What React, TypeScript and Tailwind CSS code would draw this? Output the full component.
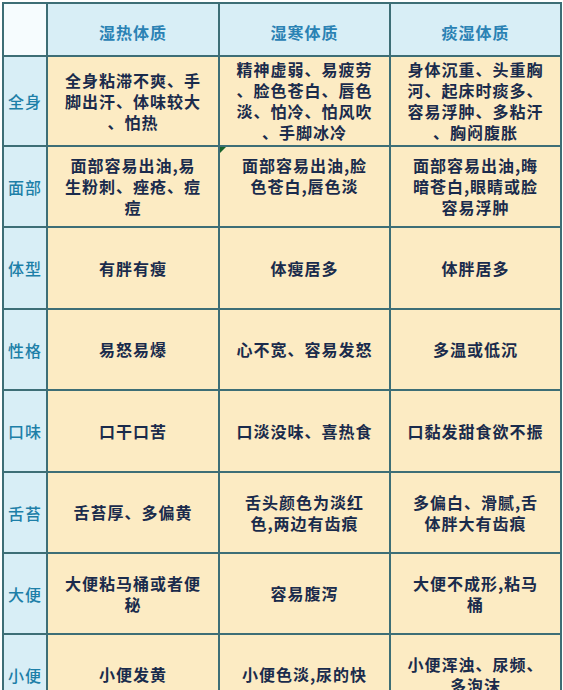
import React from "react";

const rows: { label: string; h: number; cells: string[][]; mark?: boolean }[] = [
  {
    label: "全身",
    h: 88,
    cells: [
      ["全身粘滞不爽、手", "脚出汗、体味较大", "、怕热"],
      ["精神虚弱、易疲劳", "、脸色苍白、唇色", "淡、怕冷、怕风吹", "、手脚冰冷"],
      ["身体沉重、头重胸", "河、起床时痰多、", "容易浮肿、多粘汗", "、胸闷腹胀"],
    ],
  },
  {
    label: "面部",
    h: 79,
    mark: true,
    cells: [
      ["面部容易出油,易", "生粉刺、痤疮、痘", "痘"],
      ["面部容易出油,脸", "色苍白,唇色淡", "\u00a0"],
      ["面部容易出油,晦", "暗苍白,眼睛或脸", "容易浮肿"],
    ],
  },
  { label: "体型", h: 80, cells: [["有胖有瘦"], ["体瘦居多"], ["体胖居多"]] },
  { label: "性格", h: 79, cells: [["易怒易爆"], ["心不宽、容易发怒"], ["多温或低沉"]] },
  { label: "口味", h: 80, cells: [["口干口苦"], ["口淡没味、喜热食"], ["口黏发甜食欲不振"]] },
  {
    label: "舌苔",
    h: 79,
    cells: [["舌苔厚、多偏黄"], ["舌头颜色为淡红", "色,两边有齿痕"], ["多偏白、滑腻,舌", "体胖大有齿痕"]],
  },
  {
    label: "大便",
    h: 79,
    cells: [["大便粘马桶或者便", "秘"], ["容易腹泻"], ["大便不成形,粘马", "桶"]],
  },
  {
    label: "小便",
    h: 79,
    cells: [["小便发黄"], ["小便色淡,尿的快"], ["小便浑浊、尿频、", "多泡沫"]],
  },
];

const font = { fontFamily: '"Noto Sans CJK SC", "Noto Sans", sans-serif' };

export default function App() {
  return (
    <div className="w-[563px] h-[690px] overflow-hidden bg-white" style={font}>
      <div className="ml-[2px] mt-[2px] w-[560px] p-[2px] bg-[#3d6e76] grid grid-cols-[42px_170px_169px_169px] gap-[2px]">
        <div className="h-[51px] bg-[#f6fcfe]" />
        {["湿热体质", "湿寒体质", "痰湿体质"].map((t) => (
          <div
            key={t}
            className="h-[51px] bg-[#d8eef6] flex items-center justify-center pt-[4px] text-[16px] font-bold tracking-[1px] text-[#2a82b4]"
          >
            {t}
          </div>
        ))}
        {rows.map((r) => (
          <React.Fragment key={r.label}>
            <div
              className="bg-[#d8eef6] flex items-center justify-center text-[16px] font-medium tracking-[1px] text-[#1d7fa8]"
              style={{ height: r.h }}
            >
              {r.label}
            </div>
            {r.cells.map((lines, i) => (
              <div
                key={i}
                className="relative bg-[#fcebc3] flex flex-col items-center justify-center text-[16px] leading-[21px] font-bold tracking-[1px] text-[#1a2b4c]"
                style={{ height: r.h }}
              >
                {r.mark && i === 1 && (
                  <div className="absolute left-0 top-0 w-0 h-0 border-t-[6px] border-t-[#17622a] border-r-[6px] border-r-transparent" />
                )}
                {lines.map((l, j) => (
                  <div key={j} className="whitespace-nowrap">
                    {l}
                  </div>
                ))}
              </div>
            ))}
          </React.Fragment>
        ))}
      </div>
    </div>
  );
}
